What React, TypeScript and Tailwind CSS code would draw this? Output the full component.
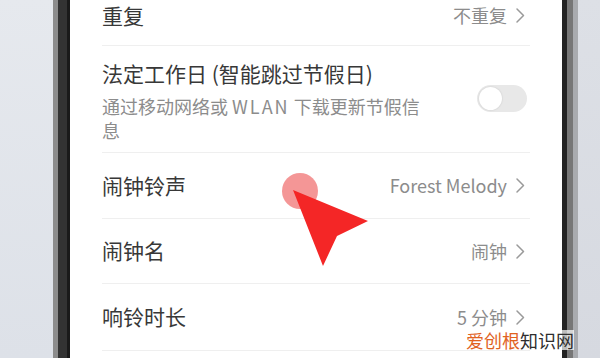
import React from 'react'

const font = { fontFamily: '"Noto Sans CJK SC", "Noto Sans", sans-serif' }

function Chevron() {
  return (
    <svg width="11" height="17" viewBox="0 0 11 17" className="ml-[8px]">
      <path d="M2 2 L8.5 8.5 L2 15" fill="none" stroke="#9a9a9a" strokeWidth="1.5" strokeLinecap="round" strokeLinejoin="round" />
    </svg>
  )
}

function Row({ title, value, height, pb = 0 }: { title: string; value: string; height: string; pb?: number }) {
  return (
    <div className={`flex items-center justify-between border-b border-[#efefef] ${height}`} style={{ paddingBottom: pb }}>
      <span className="text-[21px] text-[#383838]">{title}</span>
      <span className="mr-[4px] flex items-center text-[18px] text-[#8c8c8c]">
        {value}
        <Chevron />
      </span>
    </div>
  )
}

export default function App() {
  return (
    <div className="relative flex h-[358px] w-[600px] overflow-hidden" style={font}>
      <div className="h-full w-[53px] bg-gradient-to-b from-[#e6e9ee] to-[#dde1e8]" />
      <div className="flex h-full w-[17px]">
        <div className="w-[5px] bg-[#8c8c8c]" />
        <div className="w-[9px] bg-[#333333]" />
        <div className="w-[3px] bg-[#1a1a1a]" />
      </div>

      <div className="flex-1 bg-white px-[32px]">
        <Row title="重复" value="不重复" height="h-[46px]" pb={14} />

        <div className="flex h-[107px] items-start justify-between border-b border-[#efefef] pt-[12px]">
          <div className="flex flex-col">
            <span className="text-[21px] leading-[30px] text-[#383838]">法定工作日 (智能跳过节假日)</span>
            <span className="mt-[6px] text-[18px] leading-[24px] text-[#8c8c8c]">
              通过移动网络或 <span className="tracking-[2px]">WLAN</span> 下载更新节假信
              <br />息
            </span>
          </div>
          <div className="mr-[3px] mt-[27px] flex h-[27px] w-[50px] items-center rounded-full bg-[#e8e8e8] px-[2px]">
            <div className="h-[23px] w-[23px] rounded-full bg-white shadow-[0_0_2px_rgba(0,0,0,0.15)]" />
          </div>
        </div>

        <Row title="闹钟铃声" value="Forest Melody" height="h-[66px]" pb={0} />
        <Row title="闹钟名" value="闹钟" height="h-[65px]" pb={0} />
        <Row title="响铃时长" value="5 分钟" height="h-[67px]" pb={0} />
      </div>

      <div className="flex h-full w-[16px]">
        <div className="w-[5px] bg-[#222222]" />
        <div className="w-[6px] bg-[#777777]" />
        <div className="w-[5px] bg-[#a9abaf]" />
      </div>
      <div className="h-full w-[22px] bg-gradient-to-b from-[#dde0e6] to-[#d6d9e0]" />

      <svg className="absolute left-0 top-0" width="600" height="358" viewBox="0 0 600 358">
        <circle cx="300" cy="191" r="18" fill="#f06a6a" fillOpacity="0.7" />
        <polygon points="293,190 368,221 337,236 323,266" fill="#f42626" />
      </svg>

      <div className="absolute left-[466px] top-[330px] bg-white/70 text-[18px] leading-[20px]">
        <span className="text-[#e1621f]">爱创根</span>
        <span className="text-[#2e2e2e]">知识网</span>
      </div>
    </div>
  )
}
